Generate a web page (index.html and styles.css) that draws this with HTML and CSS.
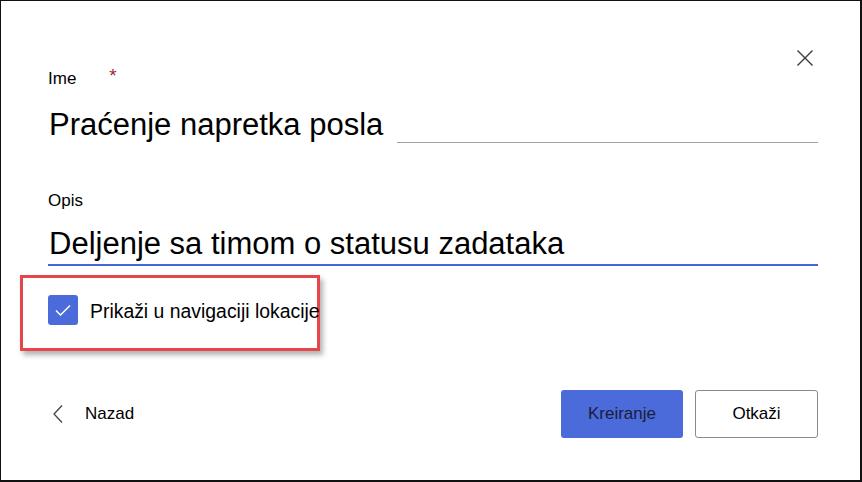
FILE: index.html
```html
<!DOCTYPE html>
<html lang="sr">
<head>
    <meta charset="UTF-8">
    <meta name="viewport" content="width=device-width, initial-scale=1.0">
    <title>Nova lista</title>
    <link rel="stylesheet" href="styles.css">
</head>
<body>
<div class="frame">
    <div class="close-row">
        <svg class="close" width="16" height="16" viewBox="0 0 16 16">
            <path d="M0.5 0.5 L15.5 15.5 M15.5 0.5 L0.5 15.5" stroke="#3b3b3b" stroke-width="1.4" fill="none"/>
        </svg>
    </div>

    <div class="label">Ime<span class="required">*</span></div>
    <div class="field field-name">
        <span class="value">Praćenje napretka posla</span>
        <span class="line"></span>
    </div>

    <div class="label label-desc">Opis</div>
    <div class="field field-desc">
        <span class="value">Deljenje sa timom o statusu zadataka</span>
    </div>

    <div class="highlight">
        <span class="checkbox">
            <svg width="16" height="12" viewBox="0 0 16 12">
                <path d="M1 6.5 L5.5 11 L15 1.5" stroke="#fff" stroke-width="1.5" fill="none"/>
            </svg>
        </span>
        <span class="check-label">Prikaži u navigaciji lokacije</span>
    </div>

    <div class="footer">
        <div class="back">
            <svg width="10" height="18" viewBox="0 0 10 18">
                <path d="M9 0.5 L1 9 L9 17.5" stroke="#444" stroke-width="1.3" fill="none"/>
            </svg>
            <span>Nazad</span>
        </div>
        <div class="actions">
            <button class="btn btn-primary">Kreiranje</button>
            <button class="btn btn-default">Otkaži</button>
        </div>
    </div>
</div>
</body>
</html>
```

FILE: styles.css
```css
body { margin: 0; font-family: "Liberation Sans", Arial, sans-serif; color: #000; background: #fff; }
.frame {
    width: 862px;
    height: 482px;
    box-sizing: border-box;
    border-top: 1px solid #111;
    border-left: 1px solid #111;
    border-right: 2px solid #111;
    border-bottom: 2px solid #111;
    padding: 0 42px 0 47px;
    overflow: hidden;
}
.close-row { display: flex; justify-content: flex-end; margin-top: 49px; height: 16px; }
.close { margin-right: 5px; }

.label { font-size: 17px; line-height: 20px; }
.required { color: #a4262c; font-size: 19px; margin-left: 33px; vertical-align: 2px; }
.label-desc { margin-top: 48px; }

.field { display: flex; align-items: flex-end; font-size: 31px; line-height: 36px; }
.field-name { margin-top: 18px; }
.field-name .line { flex: 1; margin-left: 14px; border-bottom: 1px solid #a3a3a3; }
.field-desc { margin-top: 15px; padding-bottom: 2px; border-bottom: 2px solid #4766d6; }
.value { padding-left: 1px; white-space: nowrap; }

.highlight {
    display: flex;
    align-items: center;
    width: 300px;
    height: 76px;
    box-sizing: border-box;
    margin: 9px 0 0 -28px;
    padding: 0 0 6px 25px;
    border: 3px solid #e6454a;
    box-shadow: 3px 4px 5px rgba(0, 0, 0, 0.3);
}
.checkbox {
    display: flex;
    align-items: center;
    justify-content: center;
    width: 30px;
    height: 30px;
    flex: none;
    border-radius: 3px;
    background: #4b6bdb;
}
.check-label { margin-left: 12px; font-size: 19.4px; white-space: nowrap; padding-top: 3px; }

.footer { display: flex; align-items: center; justify-content: space-between; margin-top: 39px; }
.back { display: flex; align-items: center; font-size: 17px; }
.back svg { margin-left: 5px; }
.back span { margin-left: 22px; }
.actions { display: flex; gap: 12px; }
.btn {
    height: 48px;
    font-family: "Liberation Sans", Arial, sans-serif;
    font-size: 17px;
    border-radius: 3px;
    cursor: pointer;
}
.btn-primary { width: 122px; background: #4a6bd9; color: #1b1d3a; border: none; }
.btn-default { width: 123px; background: #fff; color: #000; border: 1px solid #8a8a8a; }
```
